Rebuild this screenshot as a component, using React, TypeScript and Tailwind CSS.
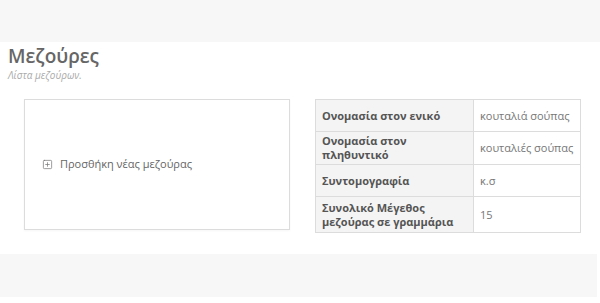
import React from 'react';
import { SquarePlus } from 'lucide-react';

const rows = [
  { label: 'Ονομασία στον ενικό', value: 'κουταλιά σούπας', h: 'h-[32px]' },
  { label: 'Ονομασία στον πληθυντικό', value: 'κουταλιές σούπας', h: 'h-[33px]' },
  { label: 'Συντομογραφία', value: 'κ.σ', h: 'h-[32px]' },
  { label: 'Συνολικό Μέγεθος μεζούρας σε γραμμάρια', value: '15', h: 'h-[36px]' },
];

const App: React.FC = () => {
  return (
    <div className="w-[600px] h-[303px] bg-white font-['Open_Sans',sans-serif] overflow-hidden">
      <div className="h-[42px] bg-[#f7f7f7]"></div>

      <div className="pl-[8px] pt-[3px]">
        <h1 className="text-[19px] leading-[22px] font-semibold text-[#666]">Μεζούρες</h1>
        <p className="mt-[2px] text-[10px] leading-[12px] italic text-[#aaa]">Λίστα μεζούρων.</p>
      </div>

      <div className="flex gap-[25px] pl-[24px] pt-[18px]">
        <div className="w-[266px] h-[131px] border border-[#dcdcdc] flex items-center pl-[17px] shadow-[0_1px_2px_rgba(0,0,0,0.04)]">
          <SquarePlus className="w-[11px] h-[11px] text-[#777]" strokeWidth={1.6} />
          <span className="ml-[7px] text-[11px] text-[#666]">Προσθήκη νέας μεζούρας</span>
        </div>

        <table className="w-[266px] border-collapse border border-[#dcdcdc] text-[11px]">
          <tbody>
            {rows.map((r) => (
              <tr key={r.label} className={r.h}>
                <td className="w-[158px] bg-[#f4f4f4] border border-[#dcdcdc] px-[6px] py-0 font-bold text-[#555] leading-[14px]">
                  {r.label}
                </td>
                <td className="border border-[#dcdcdc] px-[6px] py-0 text-[#777] leading-[14px]">
                  {r.value}
                </td>
              </tr>
            ))}
          </tbody>
        </table>
      </div>

      <div className="mt-[21px] h-[43px] w-[597px] bg-[#f7f7f7]"></div>
    </div>
  );
};

export default App;
